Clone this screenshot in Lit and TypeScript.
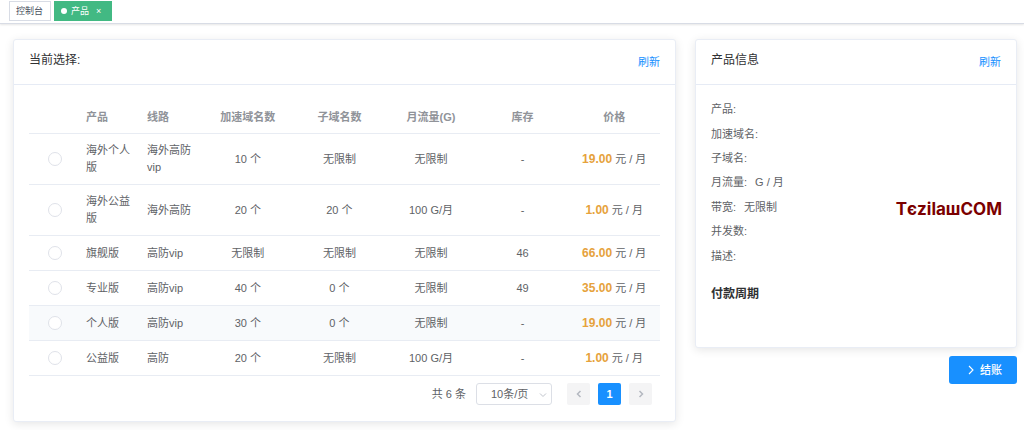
import { LitElement, html, css, svg } from 'lit';
import { customElement, property, state } from 'lit/decorators.js';
import { classMap } from 'lit/directives/class-map.js';

interface Product {
  name: string;
  line: string;
  domains: string;
  subdomains: string;
  traffic: string;
  stock: string;
  price: string;
}

const PRODUCTS: Product[] = [
  { name: '海外个人版', line: '海外高防vip', domains: '10 个', subdomains: '无限制', traffic: '无限制', stock: '-', price: '19.00' },
  { name: '海外公益版', line: '海外高防', domains: '20 个', subdomains: '20 个', traffic: '100 G/月', stock: '-', price: '1.00' },
  { name: '旗舰版', line: '高防vip', domains: '无限制', subdomains: '无限制', traffic: '无限制', stock: '46', price: '66.00' },
  { name: '专业版', line: '高防vip', domains: '40 个', subdomains: '0 个', traffic: '无限制', stock: '49', price: '35.00' },
  { name: '个人版', line: '高防vip', domains: '30 个', subdomains: '0 个', traffic: '无限制', stock: '-', price: '19.00' },
  { name: '公益版', line: '高防', domains: '20 个', subdomains: '无限制', traffic: '100 G/月', stock: '-', price: '1.00' },
];

const DETAILS: [string, string][] = [
  ['产品:', ''],
  ['加速域名:', ''],
  ['子域名:', ''],
  ['月流量:', 'G / 月'],
  ['带宽:', '无限制'],
  ['并发数:', ''],
  ['描述:', ''],
];

const chevron = (d: string, width = 1) => html`
  <svg viewBox="0 0 10 10" width="10" height="10" aria-hidden="true">
    ${svg`<path d=${d} fill="none" stroke="currentColor" stroke-width=${width} />`}
  </svg>
`;

@customElement('panel-card')
export class PanelCard extends LitElement {
  @property() heading = '';

  static styles = css`
    :host {
      display: block;
      box-sizing: border-box;
      border: 1px solid #e9edf5;
      border-radius: 3px;
      background: #fff;
      box-shadow: 0 2px 10px rgba(0, 0, 0, 0.1);
    }
    .head {
      display: flex;
      justify-content: space-between;
      align-items: center;
      height: 44px;
      padding: 0 15px;
      border-bottom: 1px solid #e6ebf5;
    }
    .title {
      margin: 0;
      padding-bottom: 4px;
      font-size: 12px;
      font-weight: 400;
      line-height: 16px;
      color: #303133;
    }
    .refresh {
      padding: 0;
      border: 0;
      background: none;
      font: inherit;
      color: #1890ff;
      cursor: pointer;
    }
  `;

  render() {
    return html`
      <div class="head">
        <h2 class="title">${this.heading}</h2>
        <button class="refresh" type="button">刷新</button>
      </div>
      <slot></slot>
    `;
  }
}

@customElement('app-root')
export class AppRoot extends LitElement {
  @state() private selected = -1;
  @state() private active = 4;

  static styles = css`
    :host {
      display: block;
      font-family: 'Liberation Sans', 'Noto Sans CJK SC', sans-serif;
      font-size: 11px;
      line-height: 18px;
      color: #606266;
    }
    .tabs {
      display: flex;
      gap: 3px;
      padding: 1px 9px 2px;
      border-bottom: 1px solid #d8dce5;
      box-shadow: 0 1px 2px rgba(0, 0, 0, 0.1);
    }
    .tab {
      display: flex;
      align-items: center;
      box-sizing: border-box;
      height: 20px;
      padding: 0 7px 0 6px;
      border: 1px solid #d8dce5;
      font-size: 9px;
      color: #495060;
      text-decoration: none;
    }
    .tab.current {
      gap: 4px;
      padding: 0 10px 0 6px;
      border-color: #42b983;
      background: #42b983;
      color: #fff;
    }
    .dot {
      width: 6px;
      height: 6px;
      border-radius: 50%;
      background: #fff;
    }
    .close {
      padding: 0 0 0 3px;
      border: 0;
      background: none;
      font: inherit;
      color: inherit;
      line-height: 12px;
    }
    .layout {
      display: grid;
      grid-template-columns: minmax(0, 663fr) minmax(0, 322fr);
      align-items: start;
      gap: 19px;
      padding: 15px 7px 8px 13px;
    }
    .list {
      padding: 15px 15px 16px;
    }
    table {
      width: 100%;
      table-layout: fixed;
      border-collapse: separate;
      border-spacing: 0;
    }
    .col-pick {
      width: 51px;
    }
    .col-name {
      width: 61px;
    }
    th,
    td {
      box-sizing: border-box;
      padding: 8px 6px;
      border-bottom: 1px solid #e8ecf3;
      text-align: center;
      vertical-align: middle;
      word-break: break-word;
    }
    th {
      padding-bottom: 7px;
      color: #909399;
      font-weight: 700;
    }
    td {
      height: 35px;
      line-height: 17px;
    }
    .start {
      text-align: left;
    }
    .active td {
      background: #f8fafc;
    }
    .radio {
      appearance: none;
      display: block;
      box-sizing: border-box;
      width: 14px;
      height: 14px;
      margin: 0 auto;
      border: 1px solid #dfe2e9;
      border-radius: 50%;
      background: #fff;
    }
    .radio:checked {
      border: 4px solid #1890ff;
    }
    .price {
      font-size: 12px;
      font-weight: 700;
      color: #e6a23c;
    }
    .pager {
      display: flex;
      justify-content: flex-end;
      align-items: center;
      gap: 8px;
      padding: 7px 8px 0;
    }
    .size {
      position: relative;
      display: flex;
      margin: 0 7px 0 2px;
    }
    .size select {
      appearance: none;
      box-sizing: border-box;
      width: 76px;
      height: 22px;
      padding: 0 14px;
      border: 1px solid #dcdfe6;
      border-radius: 3px;
      background: #fff;
      font: inherit;
      color: #606266;
    }
    .size svg {
      position: absolute;
      right: 4px;
      top: 7px;
      color: #c0c4cc;
      pointer-events: none;
    }
    .page {
      display: flex;
      justify-content: center;
      align-items: center;
      width: 23px;
      height: 22px;
      padding: 0;
      border: 0;
      border-radius: 2px;
      background: #f4f4f5;
      font: inherit;
      font-weight: 700;
      color: #b4b8c0;
    }
    .page.current {
      background: #1890ff;
      color: #fff;
    }
    .info {
      position: relative;
      padding: 12px 15px 44px;
    }
    .details {
      display: grid;
      grid-auto-rows: 1fr;
      align-items: center;
      min-height: 171px;
      margin: 0;
    }
    .detail {
      display: flex;
      gap: 8px;
    }
    dt,
    dd {
      margin: 0;
    }
    .cycle {
      margin: 17px 0 0;
      font-size: 12px;
      font-weight: 700;
      line-height: 18px;
      color: #303133;
    }
    .mark {
      position: absolute;
      right: 14px;
      top: 112px;
      font-family: Inter, 'Noto Sans', sans-serif;
      font-size: 17px;
      font-weight: 700;
      line-height: 24px;
      color: #7b0000;
    }
    .actions {
      display: flex;
      justify-content: flex-end;
      padding-top: 8px;
    }
    .checkout {
      display: flex;
      align-items: center;
      gap: 4px;
      height: 28px;
      padding: 0 15px 0 17px;
      border: 0;
      border-radius: 3px;
      background: #1890ff;
      font: inherit;
      font-weight: 500;
      color: #fff;
    }
  `;

  private renderRow(item: Product, index: number) {
    return html`
      <tr class=${classMap({ active: index === this.active })} @mouseenter=${() => (this.active = index)}>
        <td>
          <input
            class="radio"
            type="radio"
            name="product"
            aria-label=${item.name}
            .checked=${index === this.selected}
            @change=${() => (this.selected = index)}
          />
        </td>
        <td class="start">${item.name}</td>
        <td class="start">${item.line}</td>
        <td>${item.domains}</td>
        <td>${item.subdomains}</td>
        <td>${item.traffic}</td>
        <td>${item.stock}</td>
        <td><span class="price">${item.price}</span> 元 / 月</td>
      </tr>
    `;
  }

  render() {
    return html`
      <nav class="tabs">
        <a class="tab" href="#home">控制台</a>
        <div class="tab current">
          <span class="dot"></span>
          <span>产品</span>
          <button class="close" type="button" aria-label="关闭">×</button>
        </div>
      </nav>
      <main class="layout">
        <panel-card heading="当前选择:">
          <div class="list">
            <table>
              <colgroup>
                <col class="col-pick" />
                <col class="col-name" />
                <col class="col-name" />
                <col span="5" />
              </colgroup>
              <thead>
                <tr>
                  <th></th>
                  <th class="start">产品</th>
                  <th class="start">线路</th>
                  <th>加速域名数</th>
                  <th>子域名数</th>
                  <th>月流量(G)</th>
                  <th>库存</th>
                  <th>价格</th>
                </tr>
              </thead>
              <tbody>
                ${PRODUCTS.map((item, index) => this.renderRow(item, index))}
              </tbody>
            </table>
            <div class="pager">
              <span>共 6 条</span>
              <label class="size">
                <select aria-label="每页条数">
                  <option>10条/页</option>
                </select>
                ${chevron('M2 3.5 L5 6.5 L8 3.5')}
              </label>
              <button class="page" type="button" aria-label="上一页">${chevron('M6.5 2 L3.5 5 L6.5 8', 1.5)}</button>
              <button class="page current" type="button">1</button>
              <button class="page" type="button" aria-label="下一页">${chevron('M3.5 2 L6.5 5 L3.5 8', 1.5)}</button>
            </div>
          </div>
        </panel-card>
        <section>
          <panel-card heading="产品信息">
            <div class="info">
              <dl class="details">
                ${DETAILS.map(
                  ([label, value]) => html`<div class="detail"><dt>${label}</dt><dd>${value}</dd></div>`
                )}
              </dl>
              <h3 class="cycle">付款周期</h3>
              <span class="mark">TєzilaшCOM</span>
            </div>
          </panel-card>
          <div class="actions">
            <button class="checkout" type="button">${chevron('M3 1 L7 5 L3 9', 1.1)}<span>结账</span></button>
          </div>
        </section>
      </main>
    `;
  }
}
